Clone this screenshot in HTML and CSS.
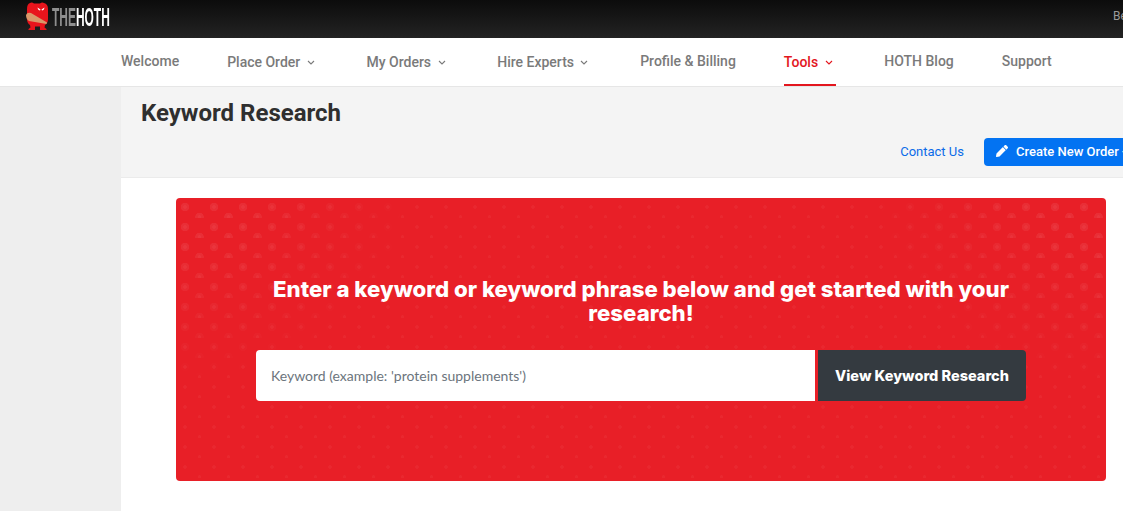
FILE: index.html
```html
<!DOCTYPE html>
<html lang="en">

<head>
  <meta charset="UTF-8">
  <meta name="viewport" content="width=device-width, initial-scale=1.0">
  <title>Keyword Research</title>
  <link rel="stylesheet" href="styles.css">
</head>

<body>
  <header class="topbar">
    <a class="logo" href="#">
      <svg class="logo-mark" width="25" height="29" viewBox="0 0 25 29">
        <path fill="#e8141c" d="M5 1q2-1 4 .5h6q2-1.500 4-.5 4 1 4 6v10q0 4-3 6l-.5 2.500 2 1.500v1H15v-3.500h-5V28H3.500v-1l2-1.500L5 23q-3-2-3-6V7q0-5 3-6z" />
        <path fill="#fff" d="M12.500 5.500l3 2-.5 1q-2 0-2.500-3zM19.500 5.500l-3 2 .5 1q2 0 2.500-3z" />
        <path fill="#d9986a" d="M1 13q1-3 5-2l16 9.500-.5 1.500L4 19q-3-2-3-6z" />
      </svg>
      <span class="logo-text"><span class="logo-the">THE</span>HOTH</span>
    </a>
    <span class="account">Ben Smith</span>
  </header>

  <nav class="mainnav">
    <a href="#">Welcome</a>
    <a href="#" class="has-menu">Place Order <svg class="caret" viewBox="0 0 8 5"><path d="M1 1l3 3 3-3" /></svg></a>
    <a href="#" class="has-menu">My Orders <svg class="caret" viewBox="0 0 8 5"><path d="M1 1l3 3 3-3" /></svg></a>
    <a href="#" class="has-menu">Hire Experts <svg class="caret" viewBox="0 0 8 5"><path d="M1 1l3 3 3-3" /></svg></a>
    <a href="#">Profile &amp; Billing</a>
    <a href="#" class="has-menu active">Tools <svg class="caret" viewBox="0 0 8 5"><path d="M1 1l3 3 3-3" /></svg></a>
    <a href="#">HOTH Blog</a>
    <a href="#">Support</a>
  </nav>

  <div class="layout">
    <aside class="sidebar"></aside>

    <main class="content">
      <div class="page-head">
        <h1>Keyword Research</h1>
        <div class="page-actions">
          <a href="#" class="contact">Contact Us</a>
          <a href="#" class="btn-new">
            <svg width="12" height="12" viewBox="0 0 512 512"><path fill="#fff" d="M498 142l-46 46c-5 5-12 5-17 0L324 77c-5-5-5-12 0-17l46-46c19-19 49-19 68 0l60 60c19 19 19 49 0 68zM284 100L22 362 0 484c-3 16 11 31 28 28l122-22 262-262c5-5 5-12 0-17L301 100c-5-5-12-5-17 0z" /></svg>
            Create New Order +
          </a>
        </div>
      </div>

      <section class="hero">
        <h2>Enter a keyword or keyword phrase below and get started with your research!</h2>
        <form class="search">
          <input type="text" placeholder="Keyword (example: 'protein supplements')">
          <button type="button">View Keyword Research</button>
        </form>
      </section>
    </main>
  </div>
</body>

</html>
```

FILE: styles.css
```css
html,
body {
  height: 100%;
}

body {
  margin: 0;
  width: 1123px;
  overflow: hidden;
  font-family: Roboto, sans-serif;
  background-color: #fff;
  display: flex;
  flex-direction: column;
}

a {
  text-decoration: none;
}

.topbar {
  flex: none;
  height: 38px;
  box-sizing: border-box;
  padding: 0 0 0 25px;
  background: linear-gradient(#0c0c0c, #232323);
  display: flex;
  align-items: center;
  justify-content: space-between;
  white-space: nowrap;
}

.logo {
  display: flex;
  align-items: center;
}

.logo-mark {
  margin-top: -5px;
}

/* no condensed face here, so squeeze a bold one */
.logo-text {
  margin: -5px 0 0 2px;
  width: 58px;
  font-family: "Liberation Sans", sans-serif;
  font-weight: 700;
  font-size: 26px;
  line-height: 26px;
  color: #fff;
  transform: scaleX(0.46);
  transform-origin: left center;
}

.logo-the {
  color: #8f8f8f;
}

.account {
  width: 10px;
  overflow: hidden;
  font-size: 12px;
  color: #9a9a9a;
  margin-top: -6px;
}

.mainnav {
  flex: none;
  height: 49px;
  box-sizing: border-box;
  padding-left: 121px;
  border-bottom: 1px solid #e6e6e6;
  display: flex;
  gap: 48px;
  white-space: nowrap;
}

.mainnav a {
  font-size: 14px;
  font-weight: 500;
  color: #7a7a7a;
  line-height: 46px;
  height: 48px;
  box-sizing: border-box;
}

.mainnav .has-menu {
  padding: 1px 3.700px 0 0;
}

.mainnav .active {
  color: #e3161e;
  border-bottom: 2px solid #e3161e;
}

.caret {
  width: 8px;
  height: 5px;
  margin-left: 3px;
  vertical-align: 2px;
  fill: none;
  stroke: currentColor;
  stroke-width: 1.1;
}

.layout {
  flex: 1;
  display: flex;
}

.sidebar {
  flex: none;
  width: 121px;
  background-color: #eee;
}

.content {
  flex: none;
  width: 1040px;
}

.page-head {
  height: 91px;
  box-sizing: border-box;
  padding: 13px 0 0 20px;
  background-color: #f4f4f4;
  border-bottom: 1px solid #ebebeb;
}

.page-head h1 {
  margin: 0;
  font-size: 24px;
  line-height: 26px;
  font-weight: 700;
  color: #2f2f2f;
}

.page-actions {
  margin-top: 12px;
  padding-right: 12px;
  display: flex;
  align-items: center;
  justify-content: flex-end;
  gap: 20px;
}

.contact {
  margin-top: -2px;
  font-size: 13px;
  color: #0b6be8;
}

.btn-new {
  height: 28px;
  width: 165px;
  box-sizing: border-box;
  padding: 0 0 2px 12px;
  background-color: #0373f2;
  border-radius: 4px;
  color: #fff;
  font-size: 13px;
  font-weight: 500;
  display: flex;
  align-items: center;
  gap: 8px;
  white-space: nowrap;
}

.hero {
  position: relative;
  width: 930px;
  height: 283px;
  box-sizing: border-box;
  margin: 20px 0 0 55px;
  padding: 79px 80px 0;
  background-color: #e81f27;
  border-radius: 4px;
  overflow: hidden;
}

/* big dots in the top corners, small faint ones everywhere */
.hero::before,
.hero::after {
  content: '';
  position: absolute;
  top: 0;
  left: 0;
  right: 0;
  bottom: 0;
}

.hero::before {
  background-image:
    radial-gradient(circle at 9px 9px, rgba(255, 255, 255, 0.07) 4px, transparent 4.500px),
    radial-gradient(circle at 23.500px 19px, rgba(255, 255, 255, 0.07) 4px, transparent 4.500px);
  background-size: 29px 20px;
  -webkit-mask-image:
    radial-gradient(ellipse 240px 190px at 0 0, #000 25%, transparent 100%),
    radial-gradient(ellipse 240px 190px at 100% 0, #000 25%, transparent 100%);
  mask-image:
    radial-gradient(ellipse 240px 190px at 0 0, #000 25%, transparent 100%),
    radial-gradient(ellipse 240px 190px at 100% 0, #000 25%, transparent 100%);
}

.hero::after {
  background-image:
    radial-gradient(circle at 9px 9px, rgba(255, 255, 255, 0.04) 1.500px, transparent 2px),
    radial-gradient(circle at 23.500px 19px, rgba(255, 255, 255, 0.04) 1.500px, transparent 2px);
  background-size: 29px 20px;
}

.hero h2 {
  position: relative;
  z-index: 1;
  margin: 0 0 25px;
  font-family: Inter, sans-serif;
  font-size: 22.200px;
  line-height: 24px;
  font-weight: 800;
  color: #fff;
  text-align: center;
}

.search {
  position: relative;
  z-index: 1;
  display: flex;
  height: 51px;
}

.search input {
  width: 559px;
  box-sizing: border-box;
  padding: 0 15px;
  border: 0;
  border-radius: 4px 0 0 4px;
  background-color: #fff;
  font-family: Lato, sans-serif;
  font-size: 14px;
}

.search input::placeholder {
  color: #6c757d;
  opacity: 1;
}

.search button {
  width: 208px;
  margin-left: 3px;
  border: 0;
  border-radius: 0 4px 4px 0;
  background-color: #343a40;
  color: #fff;
  font-family: Inter, sans-serif;
  font-size: 14.500px;
  font-weight: 800;
}
```
